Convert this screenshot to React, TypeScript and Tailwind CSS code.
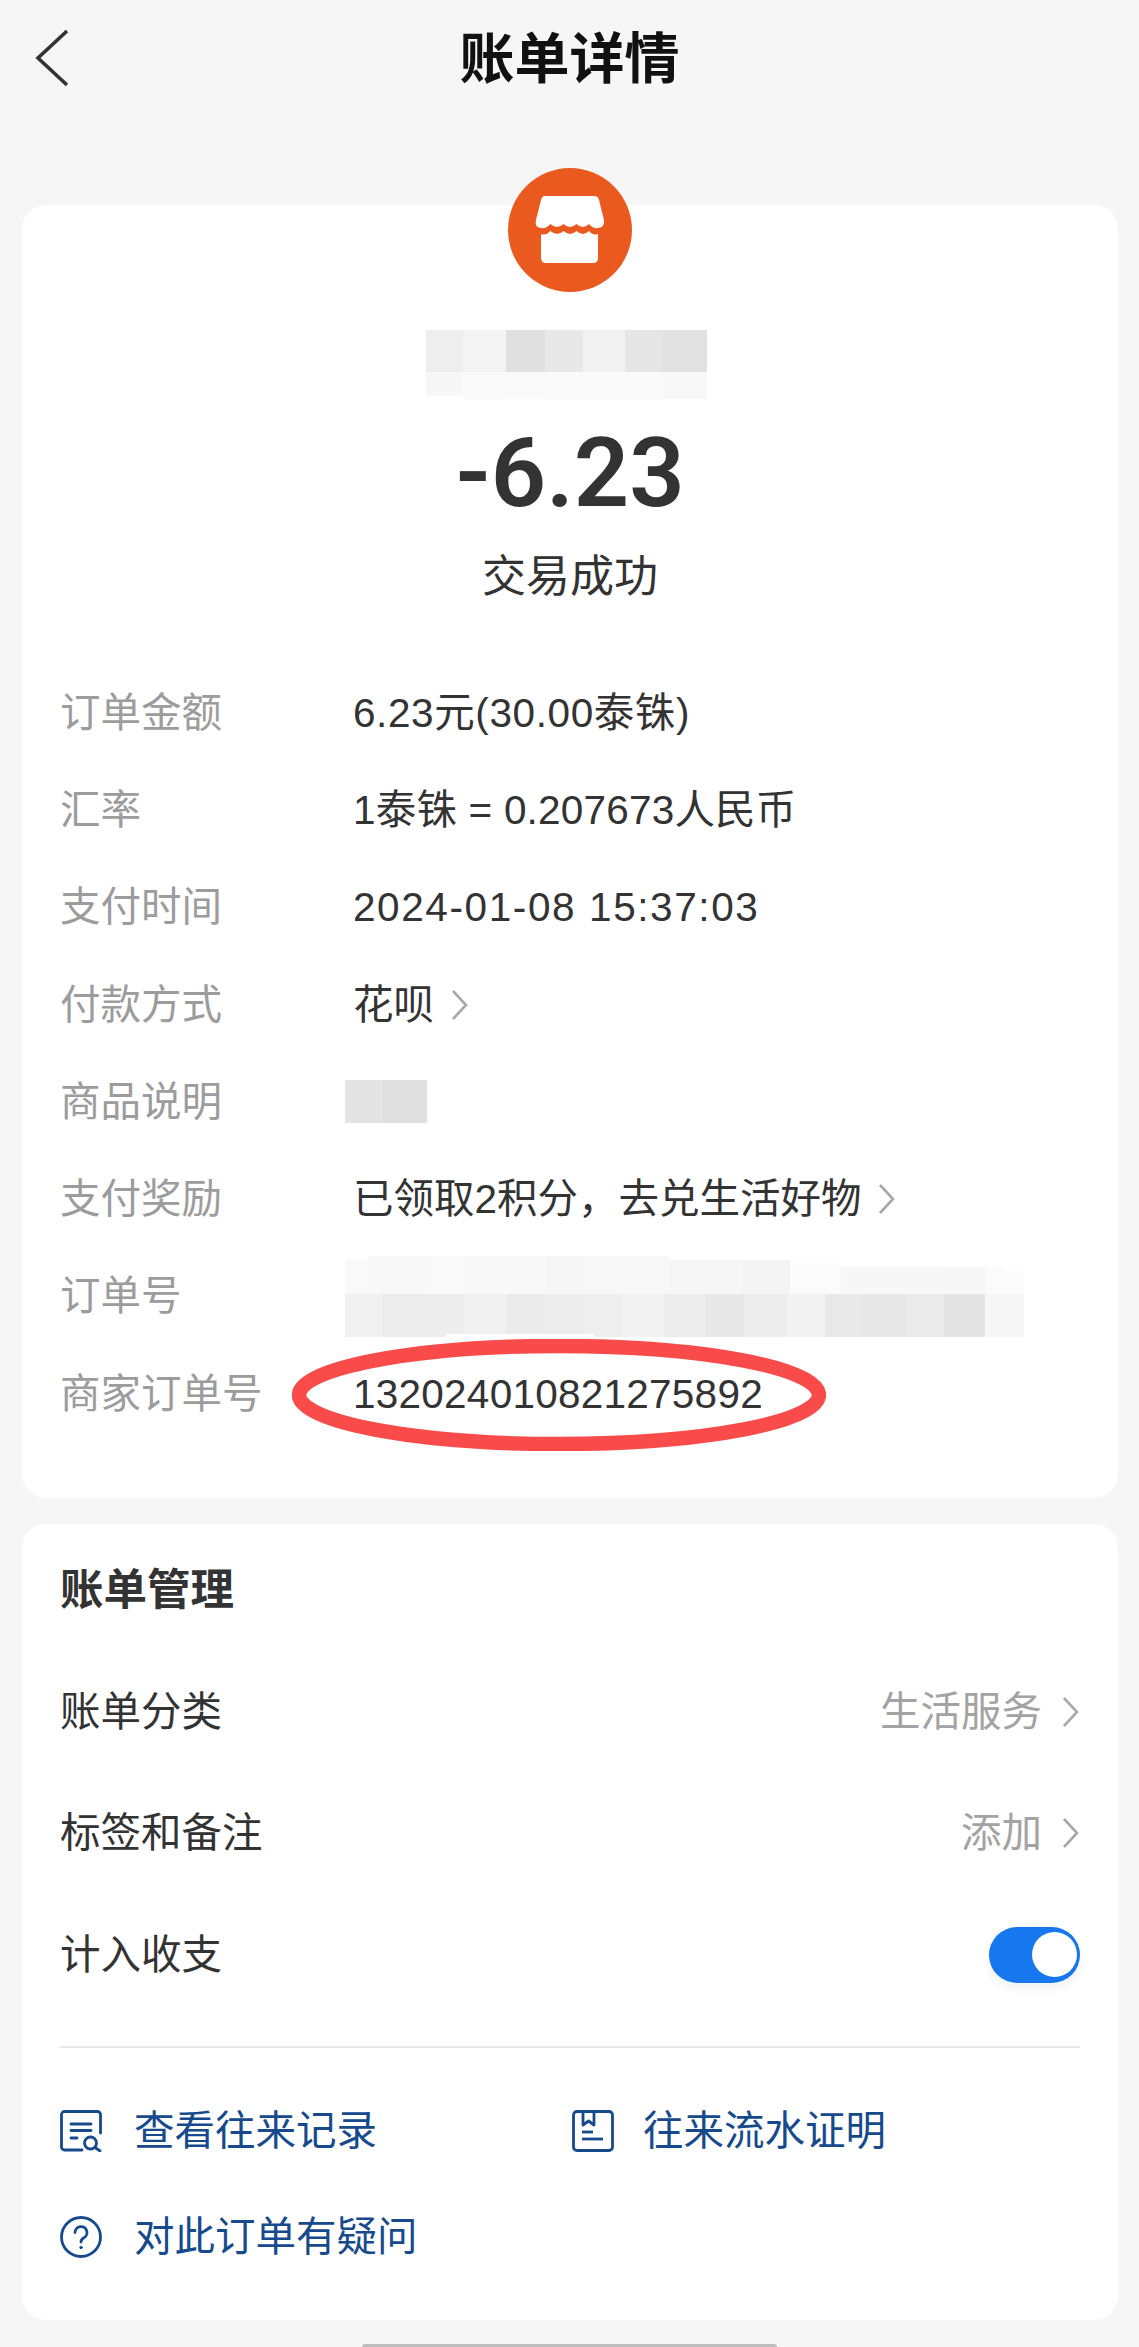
import React from "react";

const FONT = "font-['Liberation_Sans','Noto_Sans_CJK_SC',sans-serif]";

type Cell = { w: number; h?: number; c: string };

function Mosaic({ rows, className = "" }: { rows: Cell[][]; className?: string }) {
  return (
    <div className={`flex flex-col ${className}`}>
      {rows.map((row, i) => (
        <div key={i} className={i === 0 ? "flex items-end" : "flex items-start"}>
          {row.map((cell, j) => (
            <div key={j} style={{ width: cell.w, height: cell.h, background: cell.c }} />
          ))}
        </div>
      ))}
    </div>
  );
}

const nameRows: Cell[][] = [
  [
    { w: 37, h: 42, c: "#eeeeee" },
    { w: 43, h: 42, c: "#f4f4f4" },
    { w: 39, h: 42, c: "#e0e0e0" },
    { w: 38, h: 42, c: "#e8e8e8" },
    { w: 42, h: 42, c: "#f2f2f2" },
    { w: 38, h: 42, c: "#e6e6e6" },
    { w: 44, h: 42, c: "#e1e1e1" },
  ],
  [
    { w: 37, h: 24, c: "#f7f7f7" },
    { w: 43, h: 27, c: "#fafafa" },
    { w: 39, h: 27, c: "#f9f9f9" },
    { w: 118, h: 27, c: "#fafafa" },
    { w: 44, h: 27, c: "#f8f8f8" },
  ],
];

const z = (a: number, b: number) => (b - a) / 2.178;

const orderRows: Cell[][] = [
  [
    { w: z(55, 105), h: 34, c: "#f9f9f9" },
    { w: z(105, 235), h: 38, c: "#f8f8f8" },
    { w: z(235, 315), h: 38, c: "#fafafa" },
    { w: z(315, 490), h: 38, c: "#f8f8f8" },
    { w: z(490, 575), h: 38, c: "#f6f6f6" },
    { w: z(575, 760), h: 38, c: "#f8f8f8" },
    { w: z(760, 920), h: 34, c: "#f6f6f6" },
    { w: z(920, 1025), h: 34, c: "#f4f4f4" },
    { w: z(1025, 1135), h: 31, c: "#fbfbfb" },
    { w: z(1135, 1360), h: 27, c: "#f7f7f7" },
    { w: z(1360, 1450), h: 27, c: "#f6f6f6" },
    { w: z(1450, 1495), h: 27, c: "#fbfbfb" },
    { w: z(1495, 1535), h: 23, c: "#fbfbfb" },
  ],
  [
    { w: z(55, 135), h: 43, c: "#f0f0f0" },
    { w: z(135, 235), h: 43, c: "#ececec" },
    { w: z(235, 275), h: 43, c: "#ededed" },
    { w: z(275, 315), h: 40, c: "#ededed" },
    { w: z(315, 405), h: 40, c: "#f1f1f1" },
    { w: z(405, 490), h: 40, c: "#ebebeb" },
    { w: z(490, 575), h: 40, c: "#ececec" },
    { w: z(575, 597), h: 40, c: "#eeeeee" },
    { w: z(597, 660), h: 43, c: "#eeeeee" },
    { w: z(660, 750), h: 43, c: "#f3f3f3" },
    { w: z(750, 840), h: 43, c: "#ececec" },
    { w: z(840, 925), h: 43, c: "#e8e8e8" },
    { w: z(925, 1015), h: 43, c: "#ededed" },
    { w: z(1015, 1100), h: 43, c: "#f2f2f2" },
    { w: z(1100, 1180), h: 43, c: "#e9e9e9" },
    { w: z(1180, 1280), h: 43, c: "#e8e8e8" },
    { w: z(1280, 1360), h: 43, c: "#ebebeb" },
    { w: z(1360, 1450), h: 43, c: "#e4e4e4" },
    { w: z(1450, 1535), h: 43, c: "#f6f6f6" },
  ],
];

function Chevron({ className = "" }: { className?: string }) {
  return (
    <svg viewBox="0 0 18 32" className={`h-[32px] w-[18px] shrink-0 ${className}`} fill="none">
      <path d="M2 2 L15 16 L2 30" stroke="#a8a8a8" strokeWidth="2.6" strokeLinejoin="miter" />
    </svg>
  );
}

function DetailRow({ label, children }: { label: string; children: React.ReactNode }) {
  return (
    <div className="relative flex h-[97.3px] items-center">
      <div className="w-[293px] shrink-0 text-[40.5px] leading-[48px] text-[#9c9c9c]">{label}</div>
      <div className="flex items-center text-[40.5px] leading-[48px] text-[#333333]">{children}</div>
    </div>
  );
}

function ManageRow({ label, children }: { label: string; children?: React.ReactNode }) {
  return (
    <div className="flex h-[121.5px] items-center justify-between">
      <div className="text-[40.5px] leading-[48px] text-[#333333]">{label}</div>
      {children}
    </div>
  );
}

function RecordIcon() {
  return (
    <svg viewBox="0 0 42 42" className="h-[42px] w-[42px] shrink-0" fill="none" stroke="#164a8c" strokeWidth="2.8" strokeLinecap="round">
      <path d="M22 40 H4.5 A3 3 0 0 1 1.5 37 V4.5 A3 3 0 0 1 4.5 1.5 H37.5 A3 3 0 0 1 40.5 4.5 V23" />
      <path d="M11 14 H31" />
      <path d="M11 20.5 H31" />
      <path d="M11 28 H17" />
      <circle cx="30.5" cy="33" r="6" />
      <path d="M35 37.5 L40 41" />
    </svg>
  );
}

function ProofIcon() {
  return (
    <svg viewBox="0 0 42 42" className="h-[42px] w-[42px] shrink-0" fill="none" stroke="#164a8c" strokeWidth="2.8">
      <rect x="1.5" y="1.5" width="39" height="39" rx="3.5" />
      <path d="M11 2 V15 L16.5 11 L22 15 V2" strokeLinejoin="round" />
      <path d="M10 22 H21" />
      <path d="M10 29 H31" />
    </svg>
  );
}

function HelpIcon() {
  return (
    <svg viewBox="0 0 42 42" className="h-[42px] w-[42px] shrink-0" fill="none" stroke="#164a8c" strokeWidth="2.8" strokeLinecap="round">
      <circle cx="21" cy="21" r="19.5" />
      <path d="M15 16.5 A6 6 0 1 1 23.5 22 C21.8 23 21 24 21 26" />
      <circle cx="21" cy="31.5" r="1.2" fill="#164a8c" stroke="#164a8c" strokeWidth="1" />
    </svg>
  );
}

function LinkItem({ icon, label, className = "" }: { icon: React.ReactNode; label: string; className?: string }) {
  return (
    <div className={`flex items-center ${className}`}>
      {icon}
      <span className="text-[40.5px] leading-[48px] text-[#164a8c]">{label}</span>
    </div>
  );
}

export default function App() {
  return (
    <div className={`flex min-h-[2347px] w-[1139px] flex-col overflow-hidden bg-[#f6f6f6] ${FONT}`}>
      <header className="relative flex h-[205px] justify-center pt-[27px]">
        <svg viewBox="0 0 34 58" className="absolute left-[35px] top-[29px] h-[58px] w-[34px]" fill="none">
          <path d="M32 2 L3 29 L32 56" stroke="#333333" strokeWidth="3.6" />
        </svg>
        <h1 className="text-[55px] leading-[64px] font-bold text-[#111111]">账单详情</h1>
      </header>

      <section className="ml-[22px] mr-[21px] flex h-[1293px] flex-col rounded-[24px] bg-white px-[38px]">
        <svg viewBox="0 0 124 124" className="mx-auto -mt-[37px] h-[124px] w-[124px] shrink-0">
          <circle cx="62" cy="62" r="62" fill="#ea5a1f" />
          <path
            d="M37 28 H86 Q90 28 91 32 L96 52 Q97 59 90 60 Q85 61 81 56 Q75 62 68.5 56 Q62 62 55.5 56 Q49 62 42.5 56 Q38 61 33 60 Q26 59 28 52 L33 32 Q34 28 37 28 Z"
            fill="#ffffff"
          />
          <path
            d="M33 66 Q38 68 42.5 63 Q49 69 55.5 63 Q62 69 68.5 63 Q75 69 81 63 Q85 68 90 66 V90 Q90 95 85 95 H38 Q33 95 33 90 Z"
            fill="#ffffff"
          />
        </svg>
        <Mosaic rows={nameRows} className="ml-[366px] mt-[38px] w-[281px]" />
        <div className="mt-[19px] text-center font-['Roboto',sans-serif] text-[97px] leading-[110px] font-semibold text-[#333333]">-6.23</div>
        <div className="mt-[19px] text-center text-[44px] leading-[60px] text-[#333333]">交易成功</div>

        <div className="mt-[57px]">
          <DetailRow label="订单金额">
            <span className="tracking-[0.6px]">6.23元(30.00泰铢)</span>
          </DetailRow>
          <DetailRow label="汇率">
            <span className="tracking-[0.2px]">1泰铢 = 0.207673人民币</span>
          </DetailRow>
          <DetailRow label="支付时间">
            <span className="tracking-[1.6px]">2024-01-08 15:37:03</span>
          </DetailRow>
          <DetailRow label="付款方式">
            花呗
            <Chevron className="ml-[17px]" />
          </DetailRow>
          <DetailRow label="商品说明">
            <div className="-ml-[8px] flex">
              <div className="h-[43px] w-[38px] bg-[#e3e3e3]" />
              <div className="h-[43px] w-[44px] bg-[#e0e0e0]" />
            </div>
          </DetailRow>
          <DetailRow label="支付奖励">
            已领取2积分，去兑生活好物
            <Chevron className="ml-[16px]" />
          </DetailRow>
          <DetailRow label="订单号">
            <Mosaic rows={orderRows} className="-ml-[8px]" />
          </DetailRow>
          <DetailRow label="商家订单号">
            <span className="tracking-[0.25px]">132024010821275892</span>
            <svg viewBox="0 0 534 112" className="absolute left-[232px] top-[-6px] h-[112px] w-[534px]" fill="none">
              <ellipse cx="267" cy="56" rx="260" ry="49" stroke="#f94c4a" strokeWidth="14.5" />
            </svg>
          </DetailRow>
        </div>
      </section>

      <section className="ml-[22px] mr-[21px] mt-[26px] flex h-[796px] flex-col rounded-[24px] bg-white px-[38px]">
        <h2 className="h-[127px] shrink-0 pt-[42px] text-[43.5px] leading-[48px] font-bold text-[#333333]">账单管理</h2>
        <ManageRow label="账单分类">
          <div className="flex items-center gap-[20px] text-[40.5px] leading-[48px] text-[#a3a3a3]">
            生活服务
            <Chevron />
          </div>
        </ManageRow>
        <ManageRow label="标签和备注">
          <div className="flex items-center gap-[20px] text-[40.5px] leading-[48px] text-[#a3a3a3]">
            添加
            <Chevron />
          </div>
        </ManageRow>
        <ManageRow label="计入收支">
          <div className="flex h-[56px] w-[91px] items-center justify-end rounded-full bg-[#1677ee] pr-[3px] shadow-[0_6px_10px_rgba(0,0,0,0.05)]">
            <div className="h-[45px] w-[45px] rounded-full bg-white" />
          </div>
        </ManageRow>
        <div className="mt-[30px] h-[2px] shrink-0 bg-[#e8e8e8]" />
        <div className="mt-[30px] flex h-[106px] items-center">
          <LinkItem icon={<RecordIcon />} label="查看往来记录" className="w-[512px] gap-[32px]" />
          <LinkItem icon={<ProofIcon />} label="往来流水证明" className="gap-[29px]" />
        </div>
        <div className="flex h-[106px] items-center">
          <LinkItem icon={<HelpIcon />} label="对此订单有疑问" className="gap-[32px]" />
        </div>
      </section>

      <div className="mx-auto mt-[24px] h-[3px] w-[415px] rounded-t-full bg-[#bdbdbd]" />
    </div>
  );
}
